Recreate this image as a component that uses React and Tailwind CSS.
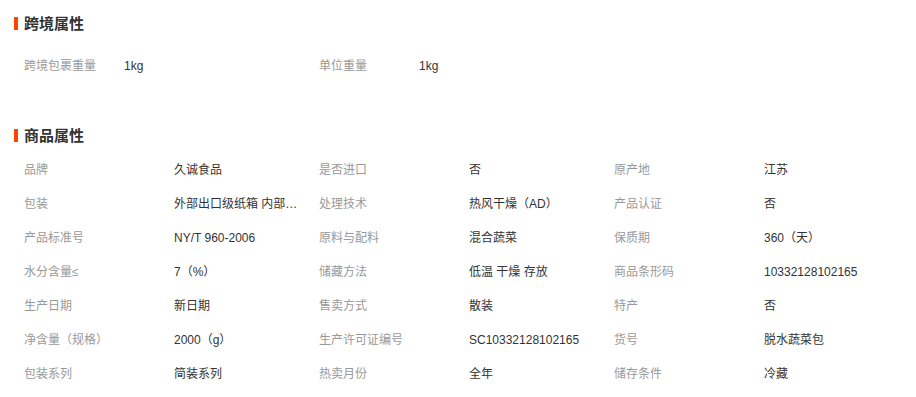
export default function App() {
  const font = { fontFamily: '"Liberation Sans", "Noto Sans CJK SC", sans-serif' };
  const cross = [
    ["跨境包裹重量", "1kg"],
    ["单位重量", "1kg"],
  ];
  const attrs = [
    ["品牌", "久诚食品"], ["是否进口", "否"], ["原产地", "江苏"],
    ["包装", "外部出口级纸箱 内部塑料袋"], ["处理技术", "热风干燥（AD）"], ["产品认证", "否"],
    ["产品标准号", "NY/T 960-2006"], ["原料与配料", "混合蔬菜"], ["保质期", "360（天）"],
    ["水分含量≤", "7（%）"], ["储藏方法", "低温 干燥 存放"], ["商品条形码", "10332128102165"],
    ["生产日期", "新日期"], ["售卖方式", "散装"], ["特产", "否"],
    ["净含量（规格）", "2000（g）"], ["生产许可证编号", "SC10332128102165"], ["货号", "脱水蔬菜包"],
    ["包装系列", "简装系列"], ["热卖月份", "全年"], ["储存条件", "冷藏"],
  ];
  const Heading = ({ children }) => (
    <div className="flex h-[32px] items-center pl-[14px]">
      <span className="h-[13px] w-[4px] bg-[#ff4400]" />
      <span className="ml-[6px] text-[15px] font-bold leading-none text-[#333333]">{children}</span>
    </div>
  );
  return (
    <div className="min-h-[397px] w-[916px] bg-white pt-[7px]" style={font}>
      <Heading>跨境属性</Heading>
      <div className="grid grid-cols-[295px_295px] pl-[24px] pt-[10px]">
        {cross.map(([k, v]) => (
          <div key={k} className="flex h-[34px] items-center text-[12px]">
            <span className="w-[100px] text-[#999999]">{k}</span>
            <span className="w-[175px] truncate text-[#333333]">{v}</span>
          </div>
        ))}
      </div>
      <div className="mt-[36px]">
        <Heading>商品属性</Heading>
      </div>
      <div className="grid grid-cols-[295px_295px_295px] pl-[24px] pt-[2px]">
        {attrs.map(([k, v]) => (
          <div key={k} className="flex h-[34px] items-center text-[12px]">
            <span className="w-[150px] shrink-0 text-[#999999]">{k}</span>
            <span className="w-[125px] truncate text-[#333333]">{v}</span>
          </div>
        ))}
      </div>
    </div>
  );
}
